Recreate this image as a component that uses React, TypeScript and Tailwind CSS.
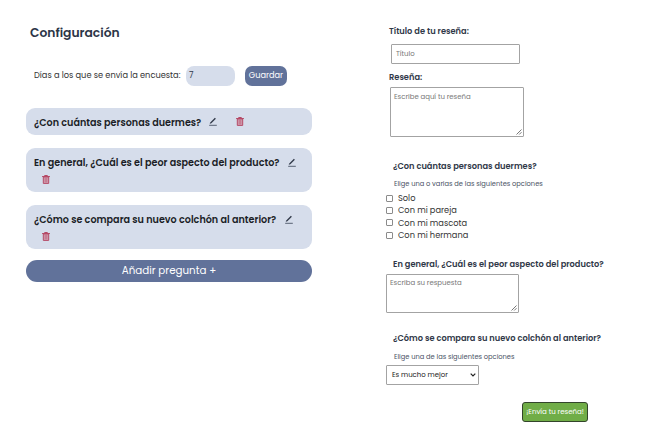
import type { ReactNode } from "react";

function Pencil() {
  return (
    <svg viewBox="0 0 8 9" className="mb-px block h-[9px] w-[8px]" fill="none">
      <path d="M1 5.8 5.9 0.8 6.9 1.8 2.4 6.2 0.8 6.8Z" fill="#303848" />
      <path d="M0.2 8.3H7.8" stroke="#4a5264" strokeWidth="0.9" />
    </svg>
  );
}

function Trash() {
  return (
    <svg viewBox="0 0 8 9" className="block h-[9px] w-[8px]" fill="none" stroke="#b54a67">
      <path d="M1.3 2H6.7V8.4H1.3Z" fill="#d3a3b4" strokeWidth="1" />
      <path d="M0.1 1.5H7.9M2.6 1.2V0.5H5.4V1.2" strokeWidth="1" />
      <path d="M3.2 3V7.4M4.8 3V7.4" strokeWidth="0.6" />
    </svg>
  );
}

function Card({ children, className }: { children: ReactNode; className: string }) {
  return (
    <div className={`w-[286px] rounded-[9px] bg-[#d6ddeb] pl-[8px] text-[9.62px] font-semibold text-[#1b1e26] ${className}`}>
      {children}
    </div>
  );
}

function Grip() {
  return (
    <svg viewBox="0 0 6 6" className="h-[6px] w-[6px]" stroke="#555" strokeWidth="0.8">
      <path d="M0.5 5.5 5.5 0.5M3.2 5.5 5.5 3.2" />
    </svg>
  );
}

function TextBox({ text, className }: { text: string; className: string }) {
  return (
    <div className={`flex justify-between rounded-[1px] border border-[#a3a3a3] bg-white text-[6.95px] text-[#777] ${className}`}>
      <span className="leading-[10px]">{text}</span>
      <span className="self-end p-px"><Grip /></span>
    </div>
  );
}

const options = ["Solo", "Con mi pareja", "Con mi mascota", "Con mi hermana"];

export default function App() {
  return (
    <main className="flex h-[446px] w-[662px] overflow-hidden whitespace-nowrap bg-white font-['Poppins','Inter',sans-serif] text-[#303848]">
      <section className="w-[360px] pl-[26px] pt-[23px]">
        <h1 className="h-[20px] pl-[4px] text-[12.3px] leading-[20px] font-semibold text-[#2c3547]">Configuración</h1>
        <div className="mt-[22px] flex h-[21px] items-center pl-[8px] text-[8.25px]">
          <label className="w-[152px] text-[#333]">Días a los que se envía la encuesta:</label>
          <div className="flex h-[20px] w-[49px] items-center rounded-[8px] bg-[#d6ddeb] pl-[3px]">7</div>
          <button className="ml-[10px] h-[20px] w-[42px] rounded-[7px] bg-[#61729a] text-[8.2px] text-white">Guardar</button>
        </div>
        <Card className="mt-[22px] flex h-[27px] items-center">
          <span className="w-[175px] pt-[3px]">¿Con cuántas personas duermes?</span>
          <Pencil />
          <span className="ml-[19px]"><Trash /></span>
        </Card>
        <Card className="mt-[13px] h-[44px] pt-[7px]">
          <div className="flex h-[15px] items-center">
            <span className="w-[254px] pt-[2px]">En general, ¿Cuál es el peor aspecto del producto?</span>
            <Pencil />
          </div>
          <div className="mt-[5px] pl-[8px]"><Trash /></div>
        </Card>
        <Card className="mt-[13px] h-[44px] pt-[7px]">
          <div className="flex h-[15px] items-center">
            <span className="w-[251px] pt-[2px]">¿Cómo se compara su nuevo colchón al anterior?</span>
            <Pencil />
          </div>
          <div className="mt-[5px] pl-[8px]"><Trash /></div>
        </Card>
        <button className="mt-[11px] block h-[22px] w-[286px] rounded-[11px] bg-[#61729a] text-[10.3px] leading-[22px] text-white">Añadir pregunta +</button>
      </section>

      <section className="w-[302px] pl-[26px] pt-[25px]">
        <h2 className="h-[12px] pl-[3px] text-[8.25px] leading-[12px] font-semibold">Título de tu reseña:</h2>
        <div className="mt-[7px] ml-[5px] flex h-[20px] w-[129px] items-center rounded-[1px] border border-[#a3a3a3] pt-px pl-[4px] text-[6.95px] text-[#777]">Título</div>
        <h2 className="mt-[7px] h-[12px] pl-[3px] text-[8.25px] leading-[12px] font-semibold">Reseña:</h2>
        <TextBox text="Escribe aquí tu reseña" className="mt-[4px] ml-[4px] h-[50px] w-[134px] pt-[4px] pl-[3px]" />
        <h2 className="mt-[23px] h-[12px] pl-[7px] text-[8.25px] leading-[12px] font-semibold">¿Con cuántas personas duermes?</h2>
        <p className="mt-[7px] h-[10px] pl-[8px] text-[6.7px] leading-[10px] text-[#4a5264]">Elige una o varias de las siguientes opciones</p>
        <ul className="mt-[3px]">
          {options.map((label) => (
            <li key={label} className="flex h-[12.4px] items-center text-[8.25px] text-[#333]">
              <span className="mr-[5px] h-[7px] w-[7px] rounded-[1px] border border-[#8b8b8b]" />
              <span>{label}</span>
            </li>
          ))}
        </ul>
        <h2 className="mt-[16.4px] h-[12px] pl-[7px] text-[8.25px] leading-[12px] font-semibold">En general, ¿Cuál es el peor aspecto del producto?</h2>
        <TextBox text="Escriba su respuesta" className="mt-[4px] h-[39px] w-[133px] pt-[3px] pl-[3px]" />
        <h2 className="mt-[19px] h-[12px] pl-[7px] text-[8.25px] leading-[12px] font-semibold">¿Cómo se compara su nuevo colchón al anterior?</h2>
        <p className="mt-[8px] h-[10px] pl-[8px] text-[6.7px] leading-[10px] text-[#4a5264]">Elige una de las siguientes opciones</p>
        <div className="mt-[3px] flex h-[20px] w-[93px] items-center justify-between rounded-[1px] border border-[#a3a3a3] pr-[2px] pl-[5px] text-[6.95px] text-[#222]">
          <span className="pt-px">Es mucho mejor</span>
          <svg viewBox="0 0 6 4" className="h-[4px] w-[6px]" fill="none" stroke="#222" strokeWidth="1.2"><path d="M0.7 0.7 3 3 5.3 0.7" /></svg>
        </div>
        <button className="mt-[17px] ml-[136px] block h-[20px] w-[66px] rounded-[3px] border border-[#33452b] bg-[#70ad47] text-[7px] text-white">¡Envía tu reseña!</button>
      </section>
    </main>
  );
}
